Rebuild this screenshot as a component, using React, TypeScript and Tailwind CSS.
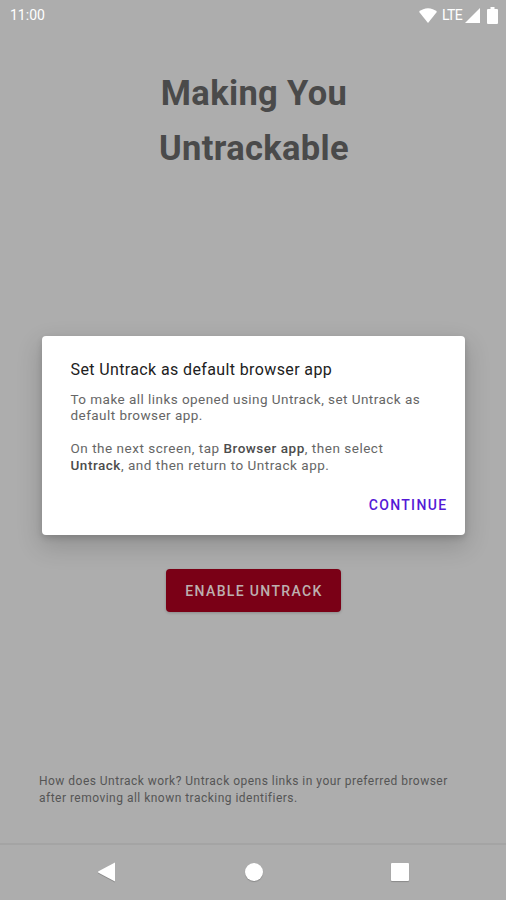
interface DialogProps {
  title: string;
  action: string;
  children: React.ReactNode;
}

function StatusBar() {
  return (
    <header className="flex h-[30px] shrink-0 items-center justify-between pl-[10px] pr-[8px] text-white">
      <span className="text-[14px] leading-none">11:00</span>
      <div className="flex items-center">
        <svg width="18" height="15" viewBox="0 0 18 15" fill="currentColor">
          <path d="M0 3.8C5-.9 13-.9 18 3.8L9 15Z" />
        </svg>
        <span className="ml-[5px] w-[20px] text-[14px] leading-none tracking-[-0.6px]">LTE</span>
        <svg className="ml-[3px]" width="15" height="15" viewBox="0 0 15 15" fill="currentColor">
          <path d="M15 0V15H0Z" />
        </svg>
        <svg className="ml-[7px]" width="11" height="17" viewBox="0 0 11 17" fill="currentColor">
          <path d="M3.5 0h4v2H10q1 0 1 1v13q0 1-1 1H1q-1 0-1-1V3q0-1 1-1h2.500Z" />
        </svg>
      </div>
    </header>
  );
}

function NavigationBar() {
  return (
    <nav className="flex h-[57px] shrink-0 items-center justify-between border-t-2 border-[#a4a4a4] pb-[2px] pl-[97px] pr-[97px] text-white">
      <svg className="drop-shadow-[0_1px_0.5px_rgba(0,0,0,0.2)]" width="19" height="20" viewBox="0 0 19 20" fill="currentColor">
        <path d="M18 .5V19.500L1.500 10.800q-1.200-.8 0-1.600Z" />
      </svg>
      <span className="size-[18px] rounded-full bg-white shadow-[0_1px_1px_rgba(0,0,0,0.2)]" />
      <span className="size-[18px] rounded-[1px] bg-white shadow-[0_1px_1px_rgba(0,0,0,0.2)]" />
    </nav>
  );
}

function Dialog({ title, action, children }: DialogProps) {
  return (
    <section
      role="dialog"
      aria-label={title}
      className="flex h-[199px] w-[423px] flex-col rounded-[4px] bg-white pl-[29px] pr-[17px] pt-[24px] shadow-[0_10px_24px_2px_rgba(0,0,0,0.16),0_3px_6px_rgba(0,0,0,0.14)]"
    >
      <h2 className="text-[16px] leading-[20px] tracking-[0.38px] text-[#212121]">{title}</h2>
      <div className="mt-[11px] text-[13.500px] leading-[16.400px] tracking-[0.45px] text-[#666]">{children}</div>
      <button className="mt-[22px] self-end text-[14px] font-medium leading-[20px] tracking-[1.35px] text-[#5419d6]">
        {action}
      </button>
    </section>
  );
}

export default function App() {
  return (
    <div className="relative flex h-[900px] w-[506px] flex-col overflow-hidden bg-[#adadad] font-['Roboto',sans-serif]">
      <StatusBar />
      <main className="flex flex-1 flex-col items-center">
        <h1 className="mt-[36px] pl-[2px] text-center text-[34.500px] font-bold leading-[55px] tracking-[0.35px] text-[#4a4a4a]">
          Making You
          <br />
          Untrackable
        </h1>
        <button className="mt-auto h-[43px] w-[175px] rounded-[4px] bg-[#7a0016] pl-[2px] pt-[2px] text-[14px] font-medium tracking-[1.35px] text-[#bdb0b0] shadow-[0_1px_3px_rgba(0,0,0,0.2)]">
          ENABLE UNTRACK
        </button>
        <p className="mb-[37px] mt-[161px] w-full pl-[39px] text-[12px] leading-[16.500px] tracking-[0.48px] text-[#555]">
          How does Untrack work? Untrack opens links in your preferred browser
          <br />
          after removing all known tracking identifiers.
        </p>
      </main>
      <NavigationBar />

      <div className="absolute inset-0 flex items-start justify-center pt-[336px]">
        <Dialog title="Set Untrack as default browser app" action="CONTINUE">
          <p>
            To make all links opened using Untrack, set Untrack as
            <br />
            default browser app.
          </p>
          <p className="mt-[16.500px] tracking-[0.52px]">
            On the next screen, tap <b className="font-medium text-[#4c4c4c]">Browser app</b>, then select
            <br />
            <b className="font-medium text-[#4c4c4c]">Untrack</b>, and then return to Untrack app.
          </p>
        </Dialog>
      </div>
    </div>
  );
}
